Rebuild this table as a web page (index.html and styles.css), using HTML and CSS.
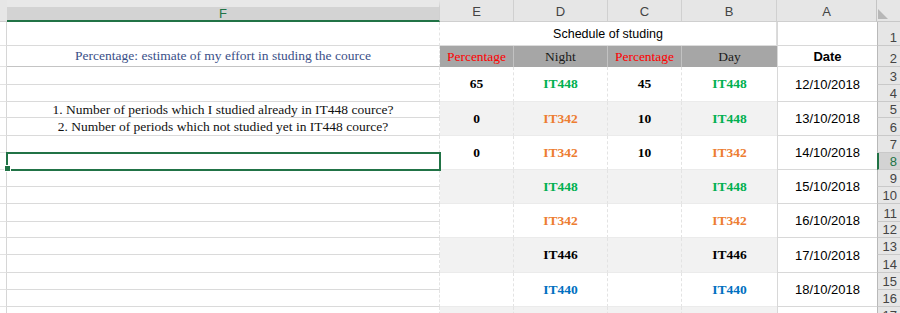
FILE: index.html
```html
<!DOCTYPE html>
<html>
<head>
<meta charset="utf-8">
<link rel="stylesheet" href="styles.css">
</head>
<body>
<div class="sheet">
  <!-- column header row -->
  <div class="ch g r0"></div>
  <div class="ch f r0 sel-col">F</div>
  <div class="ch e r0">E</div>
  <div class="ch d r0">D</div>
  <div class="ch c r0">C</div>
  <div class="ch b r0">B</div>
  <div class="ch a r0">A</div>
  <div class="corner h r0"><span class="tri"></span></div>

  <!-- G strip -->
  <div class="gc g r1"></div><div class="gc g r2"></div><div class="gc g r3"></div><div class="gc g r4"></div>
  <div class="gc g r5"></div><div class="gc g r6"></div><div class="gc g r7"></div><div class="gc g r8"></div>
  <div class="gc g r9"></div><div class="gc g r10"></div><div class="gc g r11"></div><div class="gc g r12"></div>
  <div class="gc g r13"></div><div class="gc g r14"></div><div class="gc g r15"></div><div class="gc g r16"></div>
  <div class="gc g r17"></div>

  <!-- F column -->
  <div class="fc f r1"></div>
  <div class="fc f r2 note">Percentage: estimate of my effort in studing the cource</div>
  <div class="fc f r3"></div>
  <div class="fc f r4"></div>
  <div class="fc f r5 q">1. Number of periods which I studied already in IT448 cource?</div>
  <div class="fc f r6 q">2. Number of periods which not studied yet in IT448 cource?</div>
  <div class="fc f r7"></div>
  <div class="fc f r8 active"></div>
  <div class="fc f r9"></div><div class="fc f r10"></div><div class="fc f r11"></div><div class="fc f r12"></div>
  <div class="fc f r13"></div><div class="fc f r14"></div><div class="fc f r15"></div><div class="fc f r16"></div>
  <div class="fc f r17"></div>

  <!-- title -->
  <div class="title e r1 wide">Schedule of studing</div>
  <div class="ac a r1"></div>

  <!-- header labels -->
  <div class="hd e r2 red">Percentage</div>
  <div class="hd d r2">Night</div>
  <div class="hd c r2 red">Percentage</div>
  <div class="hd b r2">Day</div>
  <div class="ac a r2 date-h">Date</div>

  <!-- 12/10 -->
  <div class="dc e r3 s2">65</div>
  <div class="dc d r3 s2 grn">IT448</div>
  <div class="dc c r3 s2">45</div>
  <div class="dc b r3 s2 grn">IT448</div>
  <div class="ac a r3 s2">12/10/2018</div>

  <!-- 13/10 -->
  <div class="dc e r5 s2 alt">0</div>
  <div class="dc d r5 s2 alt org">IT342</div>
  <div class="dc c r5 s2 alt">10</div>
  <div class="dc b r5 s2 alt grn">IT448</div>
  <div class="ac a r5 s2">13/10/2018</div>

  <!-- 14/10 -->
  <div class="dc e r7 s2">0</div>
  <div class="dc d r7 s2 org">IT342</div>
  <div class="dc c r7 s2">10</div>
  <div class="dc b r7 s2 org">IT342</div>
  <div class="ac a r7 s2">14/10/2018</div>

  <!-- 15/10 -->
  <div class="dc e r9 s2 alt"></div>
  <div class="dc d r9 s2 alt grn">IT448</div>
  <div class="dc c r9 s2 alt"></div>
  <div class="dc b r9 s2 alt grn">IT448</div>
  <div class="ac a r9 s2">15/10/2018</div>

  <!-- 16/10 -->
  <div class="dc e r11 s2"></div>
  <div class="dc d r11 s2 org">IT342</div>
  <div class="dc c r11 s2"></div>
  <div class="dc b r11 s2 org">IT342</div>
  <div class="ac a r11 s2">16/10/2018</div>

  <!-- 17/10 -->
  <div class="dc e r13 s2 alt"></div>
  <div class="dc d r13 s2 alt">IT446</div>
  <div class="dc c r13 s2 alt"></div>
  <div class="dc b r13 s2 alt">IT446</div>
  <div class="ac a r13 s2">17/10/2018</div>

  <!-- 18/10 -->
  <div class="dc e r15 s2"></div>
  <div class="dc d r15 s2 blu">IT440</div>
  <div class="dc c r15 s2"></div>
  <div class="dc b r15 s2 blu">IT440</div>
  <div class="ac a r15 s2">18/10/2018</div>

  <!-- row 17 -->
  <div class="dc e r17 alt"></div>
  <div class="dc d r17 alt"></div>
  <div class="dc c r17 alt"></div>
  <div class="dc b r17 alt"></div>
  <div class="ac a r17"></div>

  <!-- row headers -->
  <div class="rh h r1">1</div>
  <div class="rh h r2">2</div>
  <div class="rh h r3">3</div>
  <div class="rh h r4">4</div>
  <div class="rh h r5">5</div>
  <div class="rh h r6">6</div>
  <div class="rh h r7">7</div>
  <div class="rh h r8 sel-row">8</div>
  <div class="rh h r9">9</div>
  <div class="rh h r10">10</div>
  <div class="rh h r11">11</div>
  <div class="rh h r12">12</div>
  <div class="rh h r13">13</div>
  <div class="rh h r14">14</div>
  <div class="rh h r15">15</div>
  <div class="rh h r16">16</div>
  <div class="rh h r17">17</div>
</div>
</body>
</html>
```

FILE: styles.css
```css
html, body {
  margin: 0;
  padding: 0;
  background: #ffffff;
}
body {
  width: 900px;
  height: 313px;
  overflow: hidden;
  font-family: "Liberation Sans", Arial, sans-serif;
  font-size: 13px;
  color: #000;
}
.sheet {
  display: grid;
  grid-template-columns: 7px 433px 74px 94px 74px 95px 100px 23px;
  grid-template-rows: 22px 24px 21px 18px 17px 16px 18px 17px 17px 17px 17px 18px 16px 17px 18px 17px 17px 17px;
}
.sheet > div {
  box-sizing: border-box;
  display: flex;
  align-items: center;
  justify-content: center;
  white-space: nowrap;
  overflow: hidden;
}

/* columns */
.g { grid-column: 1; }
.f { grid-column: 2; }
.e { grid-column: 3; }
.d { grid-column: 4; }
.c { grid-column: 5; }
.b { grid-column: 6; }
.a { grid-column: 7; }
.h { grid-column: 8; }
.wide { grid-column: 3 / span 4; }

/* rows */
.r0 { grid-row: 1; }
.r1 { grid-row: 2; }
.r2 { grid-row: 3; }
.r3 { grid-row: 4; }
.r4 { grid-row: 5; }
.r5 { grid-row: 6; }
.r6 { grid-row: 7; }
.r7 { grid-row: 8; }
.r8 { grid-row: 9; }
.r9 { grid-row: 10; }
.r10 { grid-row: 11; }
.r11 { grid-row: 12; }
.r12 { grid-row: 13; }
.r13 { grid-row: 14; }
.r14 { grid-row: 15; }
.r15 { grid-row: 16; }
.r16 { grid-row: 17; }
.r17 { grid-row: 18; }
.s2 { grid-row-end: span 2; }

/* column headers */
.ch {
  background: #e6e6e6;
  color: #444;
  border-right: 1px solid #d0d0d0;
  border-bottom: 1px solid #cfcfcf;
  padding-top: 1px;
}
.ch.g { border-right: none; }
.ch.a { border-right: 1px solid #c4c4c4; }
.ch.sel-col {
  background: #d3d3d3;
  border-top: 7px solid #e8e8e8;
  border-bottom: 2px solid #217346;
  color: #217346;
  padding-top: 0;
}
.corner {
  background: #e6e6e6;
  border-bottom: 1px solid #c8c8c8;
  justify-content: flex-start !important;
  align-items: flex-end !important;
  padding: 0 0 2px 1px;
}
.tri {
  width: 0;
  height: 0;
  border-bottom: 10px solid #b7b7b7;
  border-right: 10px solid transparent;
}

/* G strip */
.gc {
  border-right: 1px solid #d6d6d6;
  border-bottom: 1px solid #e2e2e2;
}

/* F column */
.fc {
  font-family: "Liberation Serif", "Times New Roman", serif;
  font-size: 13.5px;
  color: #111;
  border-bottom: 1px solid #dadada;
  border-right: 1px dashed #e4e4e4;
}
.fc.r2 { border-bottom-color: #c4c4c4; }
.fc.note { color: #3b5088; }
.active {
  position: relative;
  overflow: visible !important;
  outline: 2px solid #217346;
  outline-offset: -1px;
  z-index: 2;
}
.active::after {
  content: "";
  position: absolute;
  left: -3px;
  bottom: -3px;
  width: 5px;
  height: 5px;
  background: #217346;
  border: 1px solid #fff;
}

/* title row */
.title {
  font-size: 12.5px;
  border-bottom: 1px solid #dcdcdc;
  border-right: 1px solid #dcdcdc;
}

/* header labels */
.hd {
  background: #a6a6a6;
  font-family: "Liberation Serif", "Times New Roman", serif;
  font-size: 13.5px;
  color: #1a1a1a;
  border-right: 1px solid #c2c2c2;
}
.hd.b { border-right: none; }
.red { color: #ff0000 !important; }

/* data cells */
.dc {
  font-family: "Liberation Serif", "Times New Roman", serif;
  font-size: 13.5px;
  font-weight: bold;
  background: #ffffff;
  border-right: 1px dashed #e3e3e3;
  border-bottom: 1px solid #ebebeb;
}
.dc.b { border-right: none; }
.dc.alt { background: #f2f2f2; }
.grn { color: #00b050; }
.org { color: #ed7d31; }
.blu { color: #0070c0; }

/* date column */
.ac {
  background: #fff;
  border-left: 1px solid #d8d8d8;
  border-bottom: 1px solid #d8d8d8;
  font-size: 13px;
}
.date-h { font-weight: bold; }

/* row headers */
.rh {
  background: #e6e6e6;
  color: #444;
  border-left: 1px solid #b9b9b9;
  border-bottom: 1px solid #c9c9c9;
  justify-content: flex-end !important;
  align-items: flex-end !important;
  padding: 0 3px 0 0;
  line-height: 15px;
}
.rh.sel-row {
  background: #d3d3d3;
  color: #217346;
  border-left: 2px solid #217346;
}
```
